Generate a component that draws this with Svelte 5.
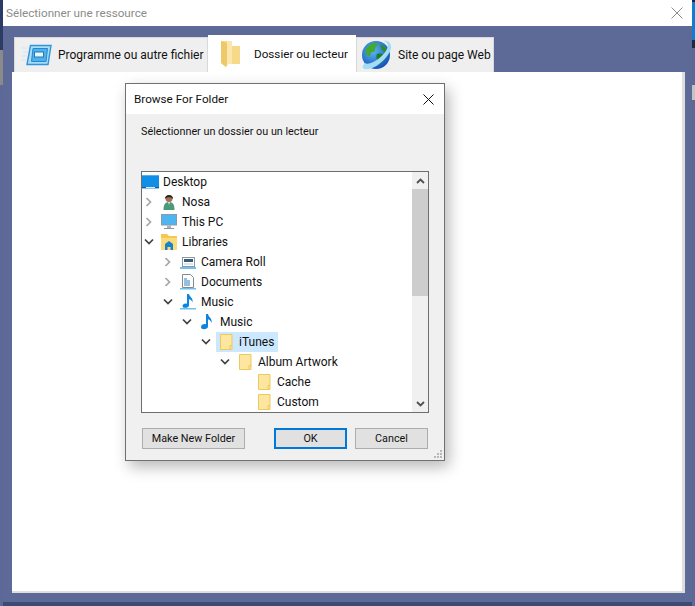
<script>
  const rows = [
    { depth: 0, icon: 'desktop', label: 'Desktop' },
    { depth: 1, toggle: 'closed', icon: 'user', label: 'Nosa' },
    { depth: 1, toggle: 'closed', icon: 'pc', label: 'This PC' },
    { depth: 1, toggle: 'open', icon: 'libraries', label: 'Libraries' },
    { depth: 2, toggle: 'closed', icon: 'camera', label: 'Camera Roll' },
    { depth: 2, toggle: 'closed', icon: 'docs', label: 'Documents' },
    { depth: 2, toggle: 'open', icon: 'musiclib', label: 'Music' },
    { depth: 3, toggle: 'open', icon: 'music', label: 'Music' },
    { depth: 4, toggle: 'open', icon: 'folder', label: 'iTunes', selected: true },
    { depth: 5, toggle: 'open', icon: 'folder', label: 'Album Artwork' },
    { depth: 6, icon: 'folder', label: 'Cache' },
    { depth: 6, icon: 'folder', label: 'Custom' }
  ];
</script>

{#snippet treeIcon(name)}
  <svg class="ticon" width="17" height="16" viewBox="0 0 17 16">
    {#if name === 'desktop'}
      <rect x="0" y="1" width="17" height="13" fill="#0f8fe6" />
      <rect x="0" y="1" width="17" height="1" fill="#4db4f2" />
      <rect x="0" y="13" width="17" height="1.400" fill="#0a5f9e" />
      <rect x="4" y="13" width="9" height="1" fill="#dcecf8" />
    {:else if name === 'user'}
      <circle cx="8" cy="4.500" r="3.500" fill="#a0705a" />
      <path d="M4 5C3.500 -.5 12.500 -.5 12 5 10 2.500 6 2.500 4 5Z" fill="#33261f" />
      <path d="M2.500 16c0-6 2-8 5.500-8s5.500 2 5.500 8Z" fill="#4b9a78" />
      <path d="M7 8h2l-1 3Z" fill="#e8e8e8" />
    {:else if name === 'pc'}
      <rect x="0.500" y="0.500" width="15" height="10.500" fill="#4fb5f0" stroke="#8a9aa8" />
      <rect x="6" y="11.500" width="4" height="2.500" fill="#a8b4bd" />
      <rect x="3" y="14" width="10" height="1" fill="#8a98a3" />
    {:else if name === 'libraries'}
      <path d="M0 0h6l2 2h8v14H0Z" fill="#f4c94e" />
      <rect x="0" y="4" width="16" height="12" fill="#fbdc7d" />
      <path d="M4 16v-6l4-3 4 3v6H9.500v-3h-3v3Z" fill="#1a80d0" />
    {:else if name === 'camera'}
      <rect x="2.500" y="3.500" width="12" height="9" fill="#fff" stroke="#8a98a3" />
      <rect x="4" y="5" width="9" height="3" fill="#3c5a72" />
      <rect x="4" y="9" width="9" height="2" fill="#dfe6eb" />
      <rect x="0" y="13" width="16" height="2" fill="#6fc0ee" />
    {:else if name === 'docs'}
      <path d="M2.500 0.500h8l3 3v10h-11Z" fill="#fff" stroke="#7f8a93" />
      <path d="M4 5h3M4 7h6M4 9h6M4 11h6" stroke="#2f7fbf" />
      <rect x="0" y="14" width="16" height="1.500" fill="#6fc0ee" />
    {:else if name === 'musiclib'}
      <path d="M7 0h2c.5 3 4.500 4 3.500 8.500-.5-2-2-3-3.500-3.300V11.500C9 14 2.500 15 2.500 12c0-2 2.500-3 4.500-2.300Z" fill="#0f84dc" />
      <rect x="0" y="14" width="16" height="1.500" fill="#6fc0ee" />
    {:else if name === 'music'}
      <path d="M7 0h2c.5 3.500 4.500 4 3.500 9-.5-2-2-3.500-3.500-3.800V12.500C9 15.500 2 16.500 2 13c0-2.500 3-3.500 5-2.800Z" fill="#0f84dc" />
    {:else}
      <path d="M2.500 0.500h11.500v15H2.500Z" fill="#fde6a0" stroke="#eec95c" />
      <path d="M12 15.500v-4h2" fill="none" stroke="#eec95c" />
    {/if}
  </svg>
{/snippet}

<div class="desk">
  <div class="window">
    <header class="titlebar">
      <span class="title">Sélectionner une ressource</span>
      <svg class="close" width="12" height="12" viewBox="0 0 12 12"><path d="M.5.500l11 11M11.500.500l-11 11" stroke="#8c8c8c" fill="none" /></svg>
    </header>

    <div class="body">
      <div class="tabs">
        <div class="tab first">
          <svg width="30" height="22" viewBox="0 0 30 22">
            <path d="M0 4h7M1 8h5M0 12h5M0 16h4" stroke="#cfe5f5" />
            <path d="M8.500 1.500H29L26 20.500H5Z" fill="#a9dcf8" stroke="#2f94da" stroke-width="1.400" />
            <path d="M11 4.500h14.500L24 17.500H9.500Z" fill="#4fb0ea" stroke="#2587cc" />
            <rect x="12.500" y="8" width="9" height="5" fill="#e9f6fd" stroke="#2079b8" />
          </svg>
          <span>Programme ou autre fichier</span>
        </div>
        <div class="tab active">
          <svg width="19" height="27" viewBox="0 0 19 27">
            <path d="M0 1h11v5h8v18H7l-2 3-5-4Z" fill="#f7d98a" />
            <path d="M6 1h5v23H6Z" fill="#fbe7ad" />
            <path d="M0 1l6 2v21l-1 3-5-4Z" fill="#efc86a" />
          </svg>
          <span>Dossier ou lecteur</span>
        </div>
        <div class="tab last">
          <svg width="32" height="32" viewBox="0 0 32 32">
            <defs>
              <radialGradient id="sea" cx="0.400" cy="0.350" r="0.750">
                <stop offset="0" stop-color="#5cb6f5" />
                <stop offset="1" stop-color="#0c48ad" />
              </radialGradient>
            </defs>
            <circle cx="16" cy="16" r="14" fill="url(#sea)" />
            <path d="M6 10c3-5 8-7 12-6-1 3-3 4-3 7s-3 1-4 3-1 4-3 3-3-5-2-7Z" fill="#45a82f" />
            <path d="M17 15c3-1 7 0 8 2s-2 7-6 8c-1-3-4-7-2-10Z" fill="#1c7f22" />
            <path d="M21 6c3 0 6 3 6 7-2 1-4-1-5-2s-2-4-1-5Z" fill="#2a8f2a" />
            <path d="M5 24C0 29 4 32 12 29 20 26 28 18 31 10c1-6-3-9-7-8 3 1 5 4 3 8-3 6-10 12-16 14-3 1-5 1-6 0Z" fill="#a4dcf8" />
          </svg>
          <span>Site ou page Web</span>
        </div>
      </div>
      <div class="panel"></div>
    </div>
  </div>

  <section class="dialog">
    <header class="dlg-title">
      <span>Browse For Folder</span>
      <svg width="11" height="11" viewBox="0 0 11 11"><path d="M.5.500l10 10M10.500.500l-10 10" stroke="#111" fill="none" /></svg>
    </header>
    <div class="dlg-body">
      <p class="prompt">Sélectionner un dossier ou un lecteur</p>
      <div class="tree">
        <ul>
          {#each rows as row}
            <li class="row" style="padding-left: {Math.max(row.depth - 1, 0) * 19}px">
              {#if row.depth > 0}
                <span class="toggle">
                  {#if row.toggle === 'closed'}
                    <svg width="8" height="10" viewBox="0 0 8 10"><path d="M1.500 1l4 4-4 4" fill="none" stroke="#a6a6a6" stroke-width="1.700" /></svg>
                  {:else if row.toggle === 'open'}
                    <svg width="10" height="8" viewBox="0 0 10 8"><path d="M1 1.500l4 4 4-4" fill="none" stroke="#404040" stroke-width="1.700" /></svg>
                  {/if}
                </span>
              {/if}
              <span class="item" class:selected={row.selected}>
                {@render treeIcon(row.icon)}
                <span class="label">{row.label}</span>
              </span>
            </li>
          {/each}
        </ul>
        <div class="scrollbar">
          <span class="arrow"><svg width="9" height="6" viewBox="0 0 9 6"><path d="M1 5l3.500-3.500L8 5" fill="none" stroke="#505050" stroke-width="1.800" /></svg></span>
          <span class="thumb"></span>
          <span class="arrow"><svg width="9" height="6" viewBox="0 0 9 6"><path d="M1 1l3.500 3.500L8 1" fill="none" stroke="#505050" stroke-width="1.800" /></svg></span>
        </div>
      </div>
      <div class="buttons">
        <button class="new">Make New Folder</button>
        <span class="spacer"></span>
        <button class="ok">OK</button>
        <button class="cancel">Cancel</button>
      </div>
      <svg class="grip" width="10" height="10" viewBox="0 0 10 10" fill="#b8b8b8">
        <rect x="7" y="1" width="2" height="2" /><rect x="4" y="4" width="2" height="2" /><rect x="7" y="4" width="2" height="2" />
        <rect x="1" y="7" width="2" height="2" /><rect x="4" y="7" width="2" height="2" /><rect x="7" y="7" width="2" height="2" />
      </svg>
    </div>
  </section>
</div>

<style>
  :global(body) {
    margin: 0;
  }

  .desk {
    position: relative;
    width: 695px;
    height: 606px;
    overflow: hidden;
    font-family: Roboto, "Noto Sans", sans-serif;
    font-size: 12px;
    color: #111;
    white-space: nowrap;
    background:
      linear-gradient(#2c3b63 0 50px, #8a8a8a 50px 85px, #5c6896 85px) left / 3px 100% no-repeat,
      linear-gradient(#1a2338 0 2px, #0a80d2 2px 40px, #1c2a48 40px 48px, #5c6896 48px 85px, #c4c4c4 85px 100px, #5c6896 100px) right / 3px 100% no-repeat,
      #5c6896;
  }

  .window {
    margin: 0 3px;
    height: 602px;
    display: flex;
    flex-direction: column;
    background: #5d6a98;
    border-bottom: 4px solid #3d4a74;
  }

  .titlebar {
    height: 26px;
    flex: none;
    background: #fff;
    display: flex;
    align-items: center;
    justify-content: space-between;
    padding: 0 9px 0 3px;
  }

  .title {
    color: #8b8b8b;
    font-size: 11.7px;
  }

  .body {
    flex: 1;
    display: flex;
    flex-direction: column;
    padding: 9px 7px 9px 9px;
  }

  .tabs {
    display: flex;
    align-items: flex-end;
    height: 37px;
    padding-left: 2px;
    flex: none;
  }

  .tab {
    display: flex;
    align-items: center;
    height: 35px;
    box-sizing: border-box;
    background: #efefef;
    border: 1px solid #d9d9d9;
    border-bottom: none;
  }

  .first {
    width: 194px;
    padding-left: 7px;
    gap: 6px;
  }

  .active {
    width: 148px;
    height: 37px;
    padding-left: 13px;
    gap: 14px;
    background: #fff;
    border: none;
    font-size: 11.7px;
  }

  .last {
    width: 138px;
    padding-left: 3px;
    gap: 6px;
  }

  .panel {
    flex: 1;
    background: #fff;
    border-right: 3px solid #dedede;
    border-bottom: 2px solid #dedede;
  }

  /* dialog sits over the window */
  .dialog {
    position: absolute;
    left: 125px;
    top: 83px;
    width: 320px;
    height: 378px;
    box-sizing: border-box;
    border: 1px solid #707070;
    background: #f0f0f0;
    box-shadow: 4px 6px 14px rgba(0, 0, 0, 0.28);
    display: flex;
    flex-direction: column;
  }

  .dlg-title {
    height: 30px;
    flex: none;
    background: #fff;
    display: flex;
    align-items: center;
    justify-content: space-between;
    padding: 0 10px 0 8px;
    font-size: 11.7px;
  }

  .dlg-body {
    position: relative;
    flex: 1;
    padding: 0 15px;
  }

  .prompt {
    margin: 0;
    padding-top: 10px;
    height: 57px;
    box-sizing: border-box;
    line-height: 16px;
    font-size: 10.8px;
  }

  .tree {
    display: flex;
    width: 288px;
    height: 242px;
    box-sizing: border-box;
    border: 1px solid #6e6e6e;
    background: #fff;
    overflow: hidden;
  }

  ul {
    flex: 1;
    margin: 0;
    padding: 0;
    list-style: none;
  }

  .row {
    display: flex;
    align-items: center;
    height: 20px;
  }

  .toggle {
    width: 19px;
    flex: none;
    display: flex;
    justify-content: center;
    padding-right: 5px;
    box-sizing: border-box;
  }

  .item {
    display: flex;
    align-items: center;
    height: 20px;
    padding-right: 4px;
  }

  .selected {
    background: #cce8ff;
    margin-left: -2px;
    padding-left: 2px;
  }

  .ticon {
    flex: none;
    margin-right: 4px;
  }

  .scrollbar {
    width: 16px;
    flex: none;
    background: #f0f0f0;
    display: flex;
    flex-direction: column;
  }

  .arrow {
    height: 17px;
    flex: none;
    display: flex;
    align-items: center;
    justify-content: center;
  }

  .thumb {
    height: 107px;
    background: #cdcdcd;
    margin-bottom: auto;
  }

  .buttons {
    display: flex;
    gap: 8px;
    margin-top: 15px;
    width: 286px;
    margin-left: 1px;
  }

  .spacer {
    width: 13px;
  }

  button {
    height: 21px;
    box-sizing: border-box;
    background: #e1e1e1;
    border: 1px solid #adadad;
    padding: 0;
    font: inherit;
    font-size: 10.8px;
    color: #111;
  }

  .new {
    width: 103px;
  }

  .ok {
    width: 73px;
    border: 2px solid #0078d7;
  }

  .cancel {
    width: 73px;
  }

  .grip {
    position: absolute;
    right: 1px;
    bottom: 1px;
  }
</style>
